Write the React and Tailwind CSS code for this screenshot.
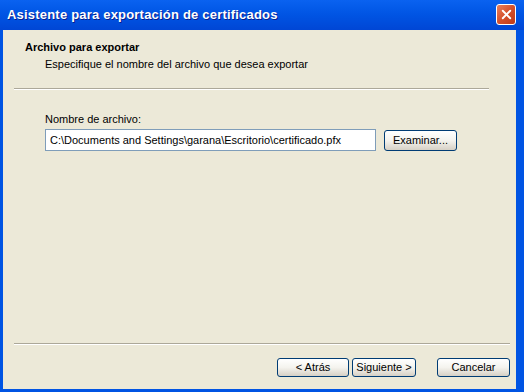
import { X } from 'lucide-react';

const font = { fontFamily: '"Liberation Sans", Arial, sans-serif' };

function XpButton({ children, className = '' }) {
  return (
    <button
      type="button"
      className={`h-[19px] rounded-[3px] border border-[#003c74] bg-gradient-to-b from-white via-[#f4f3ee] to-[#d6d0c5] text-[11px] leading-none text-black ${className}`}
    >
      {children}
    </button>
  );
}

export default function App() {
  return (
    <div className="w-[524px] h-[392px] flex flex-col bg-[#0054e3] overflow-hidden" style={font}>
      {/* Title bar */}
      <div className="h-[30px] flex items-center justify-between pl-[7px] pr-[8px] bg-gradient-to-b from-[#0a62f0] via-[#0054e3] to-[#0046d5]">
        <span className="text-white font-bold text-[13px] tracking-[0.2px] [text-shadow:1px_1px_0_#0a1e8c]">
          Asistente para exportación de certificados
        </span>
        <div className="w-[20px] h-[21px] mb-[1px] rounded-[3px] border border-white bg-gradient-to-br from-[#e8805c] via-[#d5502b] to-[#c13a16] flex items-center justify-center">
          <X size={15} strokeWidth={3} className="text-white" />
        </div>
      </div>

      {/* Body */}
      <div className="flex-1 flex flex-col bg-[#ece9d8] ml-[3px] mr-[8px] mb-[3px] text-[11px] text-black">
        <div className="pt-[10px] pl-[22px] leading-[14px] font-bold">Archivo para exportar</div>
        <div className="mt-[3px] pl-[42px] leading-[14px]">
          Especifique el nombre del archivo que desea exportar
        </div>
        <div className="mt-[17px] ml-[11px] w-[475px] border-t border-[#aca899] border-b border-b-white" />

        <div className="mt-[22px] pl-[42px] leading-[14px]">Nombre de archivo:</div>
        <div className="mt-[3px] pl-[42px] flex items-center gap-[8px]">
          <div className="w-[331px] h-[22px] border border-[#7f9db9] bg-white flex items-center pl-[4px] leading-none">
            C:\Documents and Settings\garana\Escritorio\certificado.pfx
          </div>
          <XpButton className="w-[73px] h-[21px]">Examinar...</XpButton>
        </div>

        <div className="flex-1" />

        <div className="ml-[11px] mr-[6px] border-t border-[#aca899] border-b border-b-white" />
        <div className="mt-[13px] mb-[12px] flex justify-end pr-[6px]">
          <XpButton className="w-[72px]">&lt; Atrás</XpButton>
          <XpButton className="w-[64px] ml-[3px]">Siguiente &gt;</XpButton>
          <XpButton className="w-[73px] ml-[21px]">Cancelar</XpButton>
        </div>
      </div>
    </div>
  );
}
